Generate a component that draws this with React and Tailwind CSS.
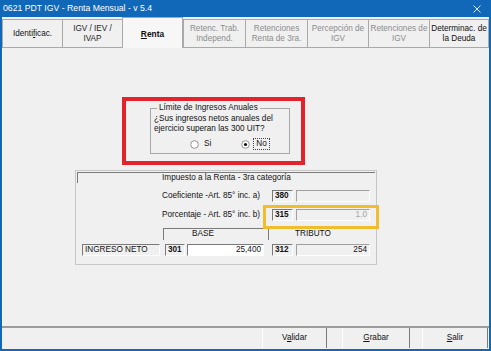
import React from "react";

const tabs = [
  { w: 60, lines: ["Identi", "f", "icac."], kind: "ident" },
  { w: 60, lines: ["IGV / IEV /", "IVAP"], color: "#262626" },
  { w: 61, kind: "sel" },
  { w: 62, lines: ["Retenc. Trab.", "Independ."], color: "#8c8c8c" },
  { w: 62, lines: ["Retenciones", "Renta de 3ra."], color: "#8c8c8c" },
  { w: 61, lines: ["Percepción de", "IGV"], color: "#8c8c8c" },
  { w: 61, lines: ["Retenciones de", "IGV"], color: "#8c8c8c" },
  { w: 60, lines: ["Determinac. de", "la Deuda"], color: "#111111" },
];

function Radio({ checked }) {
  return (
    <svg width="9" height="9" viewBox="0 0 9 9" className="shrink-0">
      <circle cx="4.5" cy="4.5" r="3.8" fill="#ffffff" stroke="#8a8a8a" strokeWidth="0.9" />
      {checked && <circle cx="4.5" cy="4.5" r="1.6" fill="#111111" />}
    </svg>
  );
}

function Code({ children, w = 21 }) {
  return (
    <div
      className="h-[12px] border-t border-l border-[#7a7a7a] border-b border-r border-b-white border-r-white font-bold pl-[2px] leading-[10px] text-[#111]"
      style={{ width: w }}
    >
      {children}
    </div>
  );
}

function Val({ children, white, gray, w = 74 }) {
  return (
    <div
      className={
        "h-[12px] border-t border-l border-[#a0a0a0] border-b border-r border-b-white border-r-white text-right pr-[2px] leading-[10px] " +
        (white ? "bg-white border-t-[#7a7a7a] border-l-[#7a7a7a] " : "") +
        (gray ? "text-[#a3a3a3]" : "text-[#111]")
      }
      style={{ width: w }}
    >
      {children}
    </div>
  );
}

export default function App() {
  return (
    <div className="w-[491px] h-[351px] bg-[#1168b8] flex flex-col font-['Liberation_Sans',Arial,sans-serif] text-[8.2px] text-[#111] overflow-hidden">
      {/* Title bar */}
      <div className="h-[17px] flex items-center justify-between pl-[3px] pr-[10px] text-white text-[8.7px]">
        <span>0621 PDT IGV - Renta Mensual - v 5.4</span>
        <svg width="8" height="8" viewBox="0 0 8 8">
          <path d="M0.5 0.5 L7.5 7.5 M7.5 0.5 L0.5 7.5" stroke="#dfe9f5" strokeWidth="1" />
        </svg>
      </div>

      {/* Window body */}
      <div className="flex-1 ml-[2px] mr-[2px] mb-[2px] bg-[#f0f0f0] flex flex-col">
        {/* Tabs row */}
        <div className="h-[31px] flex items-end border-b border-[#a9a9a9]">
          {tabs.map((t, i) =>
            t.kind === "sel" ? (
              <div
                key={i}
                className="h-[31px] mb-[-1px] bg-[#f7f7f7] border-t border-l border-r border-[#a9a9a9] flex items-center justify-center font-bold text-[8.4px] pt-[2px] relative z-10"
                style={{ width: t.w }}
              >
                <span>
                  <span className="underline">R</span>enta
                </span>
              </div>
            ) : (
              <div
                key={i}
                className={
                  "h-[28px] bg-[#f0f0f0] border-t border-l border-[#a9a9a9] flex items-center justify-center text-center leading-[10px] whitespace-nowrap " +
                  (i === tabs.length - 1 ? "border-r" : "")
                }
                style={{ width: t.w, color: t.color || "#111" }}
              >
                {t.kind === "ident" ? (
                  <span>
                    Identi<span className="underline">f</span>icac.
                  </span>
                ) : (
                  <span>
                    {t.lines[0]}
                    <br />
                    {t.lines[1]}
                  </span>
                )}
              </div>
            )
          )}
        </div>

        {/* Tab page */}
        <div className="h-[278px] flex flex-col pt-[49px] border-l border-white">
          {/* Red highlighted group */}
          <div className="ml-[119px] w-[183px] h-[68px] border-[4px] border-[#e2232b] flex flex-col">
            <div className="ml-[24px] mt-[7px] w-[140px] h-[46px] border border-[#a8a8a8] relative flex flex-col pl-[3px] pt-[5px] leading-[10px]">
              <span className="absolute left-[6px] top-[-6px] px-[2px] bg-[#f0f0f0] leading-[10px]">
                Límite de Ingresos Anuales
              </span>
              <span>¿Sus ingresos netos anuales del</span>
              <span>ejercicio superan las 300 UIT?</span>
              <div className="flex items-center mt-[4px] h-[12px]">
                <div className="ml-[36px] flex items-center gap-[5px]">
                  <Radio />
                  <span>Si</span>
                </div>
                <div className="ml-[30px] flex items-center gap-[3px]">
                  <Radio checked />
                  <span className="border border-dotted border-[#444] px-[2px] leading-[10px]">No</span>
                </div>
              </div>
            </div>
          </div>

          {/* Renta panel */}
          <div className="ml-[72px] mt-[5px] w-[302px] h-[95px] border border-[#c6c6c6] p-[1px] relative flex flex-col">
            <div className="h-[11px] border-t border-l border-[#7a7a7a] flex items-center justify-center leading-[10px]">
              Impuesto a la Renta - 3ra categoría
            </div>

            <div className="flex items-center mt-[7px] h-[12px]">
              <span className="ml-[85px] w-[110px] whitespace-nowrap">Coeficiente -Art. 85° inc. a)</span>
              <Code>380</Code>
              <div className="ml-[3px]">
                <Val></Val>
              </div>
            </div>

            <div className="flex items-center mt-[7px] h-[12px]">
              <span className="ml-[85px] w-[110px] whitespace-nowrap">Porcentaje - Art. 85° inc. b)</span>
              <Code>315</Code>
              <div className="ml-[3px]">
                <Val gray>1.0</Val>
              </div>
            </div>

            <div className="flex items-center mt-[7px] h-[12px]">
              <div className="ml-[86px] w-[100px] h-[12px] border-t border-l border-[#7a7a7a] leading-[10px] pl-[28px]">
                BASE
              </div>
              <div className="ml-[5px] w-[102px] h-[12px] border-t border-l border-[#7a7a7a] leading-[10px] pl-[26px]">
                TRIBUTO
              </div>
            </div>

            <div className="flex items-center mt-[4px] h-[12px]">
              <div className="ml-[5px] w-[78px] h-[12px] border-t border-l border-[#7a7a7a] border-b border-r border-b-white border-r-white leading-[10px] pl-[2px]">
                INGRESO NETO
              </div>
              <div className="ml-[5px]">
                <Code w={20}>301</Code>
              </div>
              <div className="ml-[2px]">
                <Val white w={77}>25,400</Val>
              </div>
              <div className="ml-[8px]">
                <Code>312</Code>
              </div>
              <div className="ml-[3px]">
                <Val>254</Val>
              </div>
            </div>

            {/* Yellow highlight */}
            <div className="absolute left-[187px] top-[34px] w-[116px] h-[24px] border-[3px] border-[#f2bd2c]" />
          </div>
        </div>

        {/* Separator */}
        <div className="h-[2px] bg-[#9b9b9b]" />

        {/* Buttons */}
        <div className="h-[20px] flex">
          <button className="ml-[260px] w-[65px] h-[20px] border-l border-white border-r border-r-[#7a7a7a] bg-[#f0f0f0] text-[8.2px]">
            V<span className="underline">a</span>lidar
          </button>
          <button className="ml-[15px] w-[68px] h-[20px] border-l border-white border-r border-r-[#7a7a7a] bg-[#f0f0f0] text-[8.2px]">
            <span className="underline">G</span>rabar
          </button>
          <button className="ml-[12px] w-[66px] h-[20px] border-l border-white border-r border-r-[#7a7a7a] bg-[#f0f0f0] text-[8.2px]">
            <span className="underline">S</span>alir
          </button>
        </div>
      </div>
    </div>
  );
}
